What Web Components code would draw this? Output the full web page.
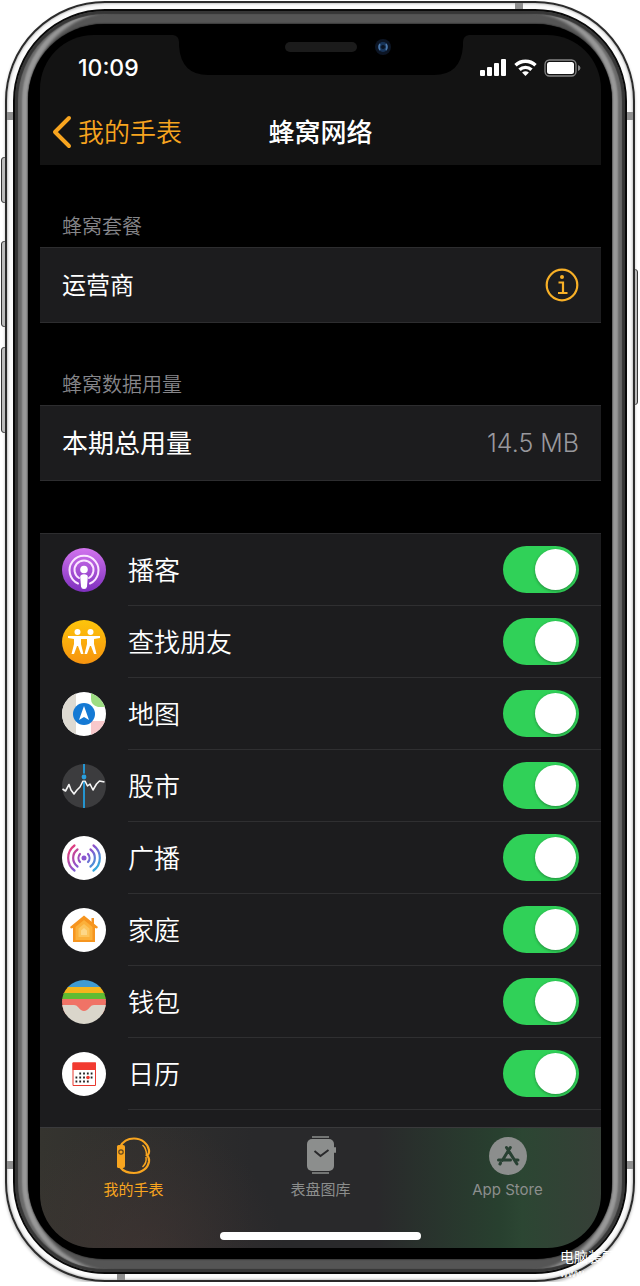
<!DOCTYPE html>
<html lang="zh-CN">
<head>
<meta charset="utf-8">
<meta name="viewport" content="width=device-width, initial-scale=1">
<title>蜂窝网络</title>
<style>
    body {
        margin: 0;
        background: #fff;
        font-family: Inter, "Noto Sans CJK SC", sans-serif;
    }
</style>
</head>
<body>
<phone-frame>
    <status-bar time="10:09"></status-bar>
    <nav-bar back="我的手表">蜂窝网络</nav-bar>
    <settings-group label="蜂窝套餐">
        <settings-cell compact>运营商<info-button slot="value"></info-button></settings-cell>
    </settings-group>
    <settings-group label="蜂窝数据用量">
        <settings-cell>本期总用量<span slot="value">14.5 MB</span></settings-cell>
    </settings-group>
    <app-list>
        <app-row icon="podcasts">播客</app-row>
        <app-row icon="friends">查找朋友</app-row>
        <app-row icon="maps">地图</app-row>
        <app-row icon="stocks">股市</app-row>
        <app-row icon="radio">广播</app-row>
        <app-row icon="home">家庭</app-row>
        <app-row icon="wallet">钱包</app-row>
        <app-row icon="calendar">日历</app-row>
    </app-list>
    <tab-bar>
        <tab-item icon="watch" active>我的手表</tab-item>
        <tab-item icon="gallery">表盘图库</tab-item>
        <tab-item icon="store">App Store</tab-item>
    </tab-bar>
</phone-frame>
<site-mark></site-mark>

<script>
// 44x44 round app icons
const appIcons = {
    podcasts: `
        <defs><linearGradient id="g" x2="0" y2="1"><stop stop-color="#d274ee"/><stop offset="1" stop-color="#7e2fbe"/></linearGradient></defs>
        <circle cx="22" cy="22" r="22" fill="url(#g)"/>
        <g fill="none" stroke="#fbe6ff" stroke-width="2" stroke-linecap="round">
            <path d="M16 35.5A14.5 14.5 0 1 1 28 35.5"/>
            <path d="M17 30A9.5 9.5 0 1 1 27 30"/>
        </g>
        <circle cx="22" cy="21.5" r="3.8" fill="#fff"/>
        <path d="M18.2 29q0-2.7 3.8-2.7t3.8 2.7l-.8 9.5q-.3 2.5-3 2.5t-3-2.5z" fill="#fff"/>`,
    friends: `
        <defs><linearGradient id="g" x2="0" y2="1"><stop stop-color="#fdc50b"/><stop offset="1" stop-color="#f7930f"/></linearGradient></defs>
        <circle cx="22" cy="22" r="22" fill="url(#g)"/>
        <g fill="#fff">
            <circle cx="15.5" cy="12" r="3"/><circle cx="28.5" cy="12" r="3"/>
            <path d="M6 16h32v2l-6 1v5l2.5 10H32l-3-8h-1l-3 8h-2.5L25 24v-5h-6v5l2.5 10H19l-3-8h-1l-3 8H9.500L12 24v-5l-6-1z"/>
        </g>`,
    maps: `
        <defs><clipPath id="c"><circle cx="22" cy="22" r="22"/></clipPath></defs>
        <g clip-path="url(#c)">
            <path fill="#fff" d="M0 0h44v44H0z"/>
            <path fill="#dedad2" d="M0 0h14v44H0z"/>
            <path fill="#9ddd83" d="M29 0h15v15h-8q-7-2-7-8z"/>
            <path fill="#f8c8cb" d="M29 29h15v15H29z"/>
        </g>
        <circle cx="22" cy="22" r="11" fill="#1479d4"/>
        <path d="M22 14l5 14-5-3-5 3z" fill="#fff"/>`,
    stocks: `
        <circle cx="22" cy="22" r="22" fill="#3c3c3e"/>
        <path d="M22 0v44" stroke="#2494cf" stroke-width="2"/>
        <path d="M.5 25l3 2L7 20.500 9 26l3 4 3-4 3-3 3-6h2l2.500 5 2.500-2 3 6 3.500-6 3-3 5 1" fill="none" stroke="#f4f4f4" stroke-width="1.6" stroke-linejoin="round"/>
        <circle cx="22" cy="13" r="3.4" fill="#3c3c3e"/><circle cx="22" cy="13" r="2.4" fill="#2aa0e0"/>`,
    radio: `
        <defs><linearGradient id="g" gradientUnits="userSpaceOnUse" x1="8" y1="9" x2="36" y2="35"><stop stop-color="#ee3a72"/><stop offset=".5" stop-color="#8a55cf"/><stop offset="1" stop-color="#22b7dd"/></linearGradient></defs>
        <circle cx="22" cy="22" r="22" fill="#fff"/>
        <g fill="none" stroke="url(#g)" stroke-width="2.2" stroke-linecap="round">
            <path d="M18 18a6 6 0 0 0 0 8M26 18a6 6 0 0 1 0 8"/>
            <path d="M15.5 13.5a10.5 10.5 0 0 0 0 17M28.5 13.5a10.5 10.5 0 0 1 0 17"/>
            <path d="M12.5 9.5a15.5 15.5 0 0 0 0 25M31.5 9.5a15.5 15.5 0 0 1 0 25"/>
        </g>
        <circle cx="22" cy="22" r="2.5" fill="#8a55cf"/>`,
    home: `
        <circle cx="22" cy="22" r="22" fill="#fff"/>
        <path d="M29.5 10H32v7h-2.5z" fill="#f39221"/>
        <path d="M22 7.5L36 19l-1 1.5-2-.5v14H11V20l-2 .5L8 19z" fill="#f6951f"/>
        <path d="M22 12l8.5 7v13h-17V19z" fill="#fbb03a"/>
        <path d="M22 16l5.5 4.5V29h-11v-8.5z" fill="#fcc45c"/>
        <path d="M22 20l3 2.5V27h-6v-4.5z" fill="#fdd788"/>`,
    wallet: `
        <defs><clipPath id="c"><circle cx="22" cy="22" r="22"/></clipPath></defs>
        <g clip-path="url(#c)">
            <path fill="#3f9bd1" d="M0 0h44v8H0z"/>
            <path fill="#f3b51c" d="M0 7h44v7H0z"/>
            <path fill="#5fbb33" d="M0 13h44v7H0z"/>
            <path fill="#f07366" d="M0 19h44v15H0z"/>
            <path fill="#dad6cb" d="M0 25h12q2.5 0 4 2 3 4 6 4t6-4q1.5-2 4-2h12v19H0z"/>
        </g>`,
    calendar: `
        <circle cx="22" cy="22" r="22" fill="#fff"/>
        <path d="M11 11h22.500v22.500H11z" fill="#fff" stroke="#e8392f"/>
        <path d="M10.500 10.500H34V18H10.500z" fill="#f23a30"/>
        <g stroke="#222" stroke-width="1.8" stroke-dasharray="1.8 2">
            <path d="M17.300 21.500H31M13.500 25.500H31M13.500 29.500H27"/>
        </g>
        <circle cx="26" cy="25.5" r="1.8" fill="#f23a30"/>`
}

// 40x40 tab bar icons, drawn in the tab's own colour
const tabIcons = {
    watch: `
        <g fill="none" stroke="currentColor" stroke-width="2.2">
            <path d="M6 11C9 5 14 2.5 20 2.5 28 2.5 34 8 35 14q.5 4-2 5.5 2.5 2 2 6C34 32 28 37 20 37 14 37 9 35 6 31"/>
            <path d="M28.5 9q4 3.5 4 10M32 21q1 6-3.5 10" stroke-width="1.5"/>
        </g>
        <path d="M4.500 9H9q2 0 2 2v19q0 2-2 2H4.500Q3 32 3 30.500v-20Q3 9 4.500 9z" fill="currentColor"/>
        <circle cx="7" cy="16" r="2.2" fill="#f8a51f" stroke="#5f4520" stroke-width="1.2"/>`,
    gallery: `
        <path d="M11 1h17M11 37h17" stroke="currentColor" stroke-width="1.6"/>
        <rect x="6" y="3" width="27" height="32" rx="5" fill="currentColor"/>
        <rect x="33" y="11" width="2" height="6" rx="1" fill="currentColor"/>
        <path d="M13.500 15l6 5 8-6" fill="none" stroke="#29292b" stroke-width="2"/>`,
    store: `
        <circle cx="20" cy="20" r="19" fill="currentColor"/>
        <g fill="none" stroke="#284032" stroke-width="3" stroke-linecap="round">
            <path d="M18.500 11.500L29 28M22.300 11.500l-8 13M12.500 27l-.5 1M10.500 24h12M27.500 24h2.500"/>
        </g>`
}

// Attaches an open shadow root filled from a template.
function render(element, html) {
    const template = document.createElement('template')
    template.innerHTML = html
    element.attachShadow({ mode: 'open' })
    .appendChild(template.content.cloneNode(true))
}

customElements.define('phone-frame',
class extends HTMLElement {
    constructor() {
        super()
        render(this, `
<style>
    :host {
        display: grid;
        grid-template-columns: 5px 1fr 5px;
        padding-top: 1px;
    }
    .side {
        display: flex;
        flex-direction: column;
        gap: 20px;
        padding-top: 156px;
    }
    .side i {
        height: 84px;
        margin: 0 -2px 0 1px;
        border: 1px solid #333;
        border-radius: 3px 0 0 3px;
        background: #bbb;
    }
    .side i:first-child {
        height: 44px;
        margin-bottom: 18px;
    }
    .side.right {
        padding-top: 268px;
    }
    .side.right i {
        height: 134px;
        margin: 0 2px 0 -1px;
        border-radius: 0 3px 3px 0;
    }
    .rim {
        position: relative;
        padding: 6px;
        border: 2px solid #2b2b2b;
        border-radius: 100px;
        background: #fbfbfb;
        box-shadow: inset 0 0 3px #8a8a8a, 0 2px 3px #bbb;
    }
    /* antenna lines across the metal rim */
    .band {
        position: absolute;
        width: 6px;
        height: 8px;
        background: #8f8f8f;
    }
    .b1, .b3 { left: 0; }
    .b2, .b4 { right: 0; }
    .b1, .b2 { top: 109px; }
    .b3, .b4 { bottom: 111px; }
    .b5, .b6 {
        width: 8px;
        height: 6px;
    }
    .b5 { top: 0; right: 110px; }
    .b6 { bottom: 0; left: 110px; }
    .bezel {
        padding: 13px;
        border: 2px solid #0a0a0a;
        border-radius: 92px;
        background: #555;
        box-shadow: inset 0 0 1px 3px #363636, inset 7px 0 2px #6a6a6a, inset -7px 0 2px #6a6a6a, inset 14px 0 3px #999, inset -14px 0 3px #999;
    }
    .glass {
        padding: 11px 11px 11px 12px;
        border-radius: 76px;
        background: #000;
        box-shadow: 0 0 2px #000;
    }
    .screen {
        overflow: hidden;
        border-radius: 54px;
        background: #000;
        color: #fff;
    }
</style>
<div class="side"><i></i><i></i><i></i></div>
<div class="rim">
    <span class="band b1"></span><span class="band b2"></span>
    <span class="band b3"></span><span class="band b4"></span>
    <span class="band b5"></span><span class="band b6"></span>
    <div class="bezel"><div class="glass"><div class="screen"><slot></slot></div></div></div>
</div>
<div class="side right"><i></i></div>
`)
    }
})

customElements.define('status-bar',
class extends HTMLElement {
    constructor() {
        super()
        render(this, `
<style>
    :host {
        display: grid;
        grid-template-columns: 1fr auto 1fr;
        height: 64px;
        background: #131313;
    }
    .time {
        padding-left: 38px;
        font-size: 23px;
        font-weight: 500;
        line-height: 66px;
    }
    .icons {
        display: flex;
        align-items: center;
        justify-content: flex-end;
        gap: 7px;
        padding-right: 20px;
    }
    svg {
        display: block;
    }
</style>
<div class="time">${this.getAttribute('time')}</div>
<svg width="296" height="40" viewBox="0 0 296 40">
    <path d="M0 0h296q-6 1-6 7v4q-2 29-29 29H35Q8 40 6 11V7q0-6-6-7z" fill="#000"/>
    <rect x="112" y="7" width="72" height="10" rx="5" fill="#1b1b1b"/>
    <circle cx="210" cy="12" r="8" fill="#0c1524"/>
    <circle cx="210" cy="12" r="5" fill="#173459"/>
    <path d="M207 9q-2 3 0 6M213 9q2 3 0 6" stroke="#4d79ab" stroke-width="1.5" fill="none"/>
    <circle cx="210" cy="12" r="2" fill="#0a1322"/>
</svg>
<div class="icons">
    <svg width="27" height="18" viewBox="0 0 27 18" fill="#fff">
        <rect y="11" width="5" height="6" rx="1"/><rect x="7" y="8" width="5" height="9" rx="1"/>
        <rect x="14" y="4" width="5" height="13" rx="1"/><rect x="21" y="0" width="5" height="17" rx="1"/>
    </svg>
    <svg width="23" height="18" viewBox="0 0 23 18" fill="none" stroke="#fff" stroke-width="3.4">
        <path d="M1.500 6.200a14.500 14.500 0 0 1 20 0M5.500 10.800a8.700 8.700 0 0 1 12 0"/>
        <path d="M11.500 17l-3.400-3.400q3.400-2.800 6.800 0z" fill="#fff" stroke="none"/>
    </svg>
    <svg width="37" height="18" viewBox="0 0 37 18">
        <rect x="1" y="1" width="31" height="16" rx="4.5" fill="none" stroke="#858585" stroke-width="1.3"/>
        <rect x="3" y="3" width="27" height="12" rx="2.5" fill="#fff"/>
        <path d="M34 6q2.500 1 2.500 3T34 12z" fill="#858585"/>
    </svg>
</div>
`)
    }
})

customElements.define('nav-bar',
class extends HTMLElement {
    constructor() {
        super()
        render(this, `
<style>
    :host {
        display: grid;
        grid-template-columns: 1fr auto 1fr;
        align-items: center;
        height: 66px;
        background: #131313;
        font-size: 26px;
        line-height: 38px;
    }
    a {
        display: flex;
        align-items: center;
        gap: 6px;
        padding-left: 12px;
        color: #f8a51f;
        font-weight: 350;
        text-decoration: none;
    }
    h1 {
        margin: 0;
        font-size: 26px;
        font-weight: 500;
    }
    a span, h1 {
        padding-top: 2px;
    }
</style>
<a href="#">
    <svg width="20" height="34" viewBox="0 0 20 34"><path d="M17 3L3 17l14 14" fill="none" stroke="currentColor" stroke-width="4" stroke-linecap="round" stroke-linejoin="round"/></svg>
    <span>${this.getAttribute('back')}</span>
</a>
<h1><slot></slot></h1>
`)
    }
})

customElements.define('settings-group',
class extends HTMLElement {
    constructor() {
        super()
        render(this, `
<style>
    :host {
        display: block;
    }
    h2 {
        margin: 0;
        padding: 48px 22px 6px;
        color: #86868a;
        font-size: 20px;
        font-weight: 350;
        line-height: 28px;
    }
</style>
<h2>${this.getAttribute('label')}</h2>
<slot></slot>
`)
    }
})

customElements.define('settings-cell',
class extends HTMLElement {
    constructor() {
        super()
        render(this, `
<style>
    :host {
        display: flex;
        align-items: center;
        justify-content: space-between;
        height: 74px;
        padding: 0 22px;
        border: solid #2d2d2f;
        border-width: 1px 0;
        background: #1c1c1e;
        font-size: 26px;
        line-height: 36px;
    }
    :host([compact]) {
        font-size: 24px;
    }
    div {
        padding-top: 2px;
    }
    ::slotted(span) {
        color: #98989d;
        font-size: 25px;
        font-weight: 300;
    }
</style>
<div><slot></slot></div>
<slot name="value"></slot>
`)
    }
})

customElements.define('info-button',
class extends HTMLElement {
    constructor() {
        super()
        render(this, `
<style>
    :host {
        display: block;
    }
    button {
        display: block;
        padding: 0;
        border: 0;
        background: none;
        color: #f8b027;
    }
    svg {
        display: block;
    }
</style>
<button aria-label="info">
    <svg width="34" height="34" viewBox="0 0 34 34" fill="none" stroke="currentColor" stroke-width="2.2">
        <circle cx="17" cy="17" r="15.3"/>
        <path d="M13.500 14.500H18V25M13 25h9.500"/>
        <circle cx="17" cy="9" r="2" fill="currentColor" stroke="none"/>
    </svg>
</button>
`)
    }
})

customElements.define('app-list',
class extends HTMLElement {
    constructor() {
        super()
        render(this, `
<style>
    :host {
        display: block;
        margin-top: 52px;
        padding-bottom: 17px;
        border-top: 1px solid #2d2d2f;
        background: #1c1c1e;
    }
</style>
<slot></slot>
`)
    }
})

customElements.define('app-row',
class extends HTMLElement {
    constructor() {
        super()
        render(this, `
<style>
    :host {
        display: block;
        padding-left: 22px;
    }
    label {
        display: flex;
        align-items: center;
        gap: 22px;
    }
    .line {
        display: flex;
        flex: 1;
        align-items: center;
        justify-content: space-between;
        height: 71px;
        padding-right: 22px;
        border-bottom: 1px solid #2f2f31;
        font-size: 26px;
        font-weight: 350;
        line-height: 36px;
    }
    .name {
        padding-top: 2px;
    }
    input {
        appearance: none;
        display: flex;
        justify-content: flex-end;
        width: 76px;
        height: 47px;
        margin: 0;
        padding: 3px;
        box-sizing: border-box;
        border-radius: 24px;
        background: #39393d;
    }
    input::before {
        content: '';
        width: 41px;
        height: 41px;
        border-radius: 50%;
        background: #fff;
        box-shadow: 0 1px 3px rgba(0, 0, 0, .35);
    }
    input:checked {
        background: #30d158;
    }
    input:not(:checked) {
        justify-content: flex-start;
    }
</style>
<label>
    <svg width="44" height="44" viewBox="0 0 44 44">${appIcons[this.getAttribute('icon')]}</svg>
    <span class="line"><span class="name"><slot></slot></span><input type="checkbox" role="switch" checked></span>
</label>
`)
    }
})

customElements.define('tab-bar',
class extends HTMLElement {
    constructor() {
        super()
        render(this, `
<style>
    :host {
        display: block;
        padding: 8px 0;
        border-top: 1px solid #3a3a3c;
        background:
            radial-gradient(circle at 18% 110%, rgba(72, 55, 53, .5), transparent 30%),
            linear-gradient(90deg, #35342f, #29292b 38%, #29292b 60%, #28402f 82%, #2c4633 86%, #363f37);
    }
    nav {
        display: grid;
        grid-template-columns: repeat(3, 1fr);
    }
    .home {
        width: 36%;
        height: 8px;
        margin: 32px auto 0;
        border-radius: 4px;
        background: #fff;
    }
</style>
<nav><slot></slot></nav>
<div class="home"></div>
`)
    }
})

customElements.define('tab-item',
class extends HTMLElement {
    constructor() {
        super()
        render(this, `
<style>
    :host {
        display: block;
        color: #8c8e8d;
    }
    :host([active]) {
        color: #f8a51f;
    }
    a {
        display: flex;
        flex-direction: column;
        align-items: center;
        gap: 4px;
        color: inherit;
        font-size: 15px;
        line-height: 20px;
        text-decoration: none;
    }
</style>
<a href="#">
    <svg width="40" height="40" viewBox="0 0 40 40">${tabIcons[this.getAttribute('icon')]}</svg>
    <slot></slot>
</a>
`)
    }
})

customElements.define('site-mark',
class extends HTMLElement {
    constructor() {
        super()
        render(this, `
<style>
    :host {
        position: absolute;
        top: 1247px;
        right: 6px;
        color: #fff;
        font-size: 14px;
        line-height: 20px;
    }
    small {
        display: block;
        font-family: "Liberation Sans", sans-serif;
        font-size: 11px;
        line-height: 12px;
    }
</style>
电脑装配网<small>www.dnzp.com</small>
`)
    }
})
</script>
</body>
</html>
